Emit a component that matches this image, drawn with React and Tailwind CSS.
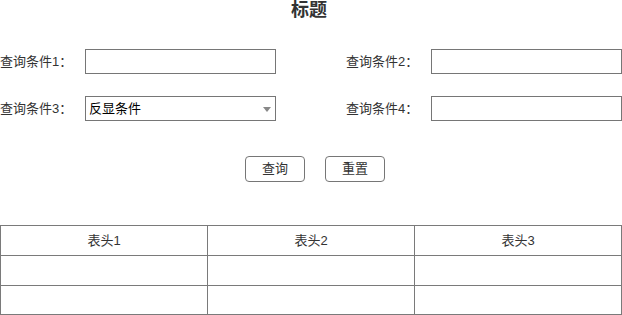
const font = { fontFamily: '"Liberation Sans", "Noto Sans CJK SC", sans-serif' };

const Field = ({ label, children }) => (
  <div className="flex items-center w-[276px]">
    <span className="w-[85px] shrink-0 text-[13px] text-[#333]">{label}</span>
    {children}
  </div>
);

const TextBox = () => (
  <input className="w-[191px] h-[25px] border border-[#767676] bg-white outline-none px-1 text-[13px]" />
);

const SelectBox = () => (
  <div className="relative w-[191px] h-[25px] border border-[#767676] bg-white flex items-center pl-[3px] text-[13px] text-black">
    反显条件
    <span className="absolute right-[4px] top-[10px] w-0 h-0 border-l-[4px] border-r-[4px] border-t-[5px] border-l-transparent border-r-transparent border-t-[#888]" />
  </div>
);

const App = () => {
  const heads = ["表头1", "表头2", "表头3"];
  return (
    <div className="w-[622px] h-[315px] bg-white text-[#333] overflow-hidden" style={font}>
      <h1 className="text-center text-[18px] font-bold leading-[20px] h-[20px] pr-[4px]">标题</h1>
      <div className="flex flex-col gap-[22px] mt-[29px]">
        <div className="flex gap-[70px]">
          <Field label="查询条件1："><TextBox /></Field>
          <Field label="查询条件2："><TextBox /></Field>
        </div>
        <div className="flex gap-[70px]">
          <Field label="查询条件3："><SelectBox /></Field>
          <Field label="查询条件4："><TextBox /></Field>
        </div>
      </div>
      <div className="flex justify-center gap-[20px] mt-[35px] pl-[8px]">
        <button className="w-[60px] h-[26px] border border-[#767676] rounded-[4px] text-[13px] text-[#333] bg-white">查询</button>
        <button className="w-[60px] h-[26px] border border-[#767676] rounded-[4px] text-[13px] text-[#333] bg-white">重置</button>
      </div>
      <table className="mt-[43px] w-[622px] border-collapse table-fixed text-[13px]">
        <thead>
          <tr>
            {heads.map((h) => (
              <th key={h} className="h-[30px] border border-[#7a7a7a] font-normal text-[#333]">{h}</th>
            ))}
          </tr>
        </thead>
        <tbody>
          <tr>
            {heads.map((h) => (
              <td key={h} className="h-[30px] border border-[#7a7a7a]"></td>
            ))}
          </tr>
          <tr>
            {heads.map((h) => (
              <td key={h} className="h-[29px] border border-[#7a7a7a]"></td>
            ))}
          </tr>
        </tbody>
      </table>
    </div>
  );
};

export default App;
